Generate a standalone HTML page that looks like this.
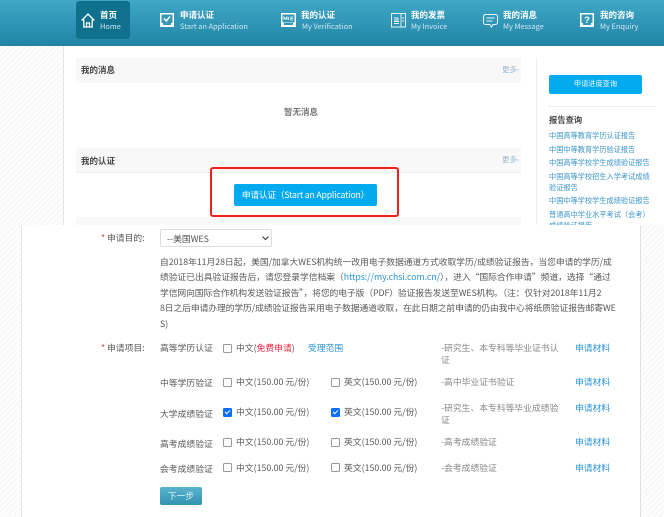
<!DOCTYPE html>
<html lang="zh">
<head>
<meta charset="utf-8">
<style>
html,body{margin:0;padding:0}
body{width:664px;height:517px;position:relative;overflow:hidden;background:#fff;font-family:"Noto Sans CJK SC","Liberation Sans",sans-serif;font-size:10px;color:#555}
.a{position:absolute;white-space:nowrap}
.hatch{background:repeating-linear-gradient(135deg,#fefefe 0 2px,#f8f8f8 2px 4px)}
.nav{position:absolute;left:0;top:0;width:664px;height:46px;background:linear-gradient(#40a7c6,#2184a6)}
.t1{font-size:8.500px;font-weight:bold;color:#fff;line-height:12px}
.t2{font-size:7.400px;color:#cfe8f1;line-height:12px}
.bar{position:absolute;left:76px;width:445px;background:#f8f8f8}
.h{font-size:8.500px;font-weight:bold;color:#444;line-height:12px}
.more{font-size:7.500px;color:#9db4cf;line-height:12px}
.l{font-size:7.200px;color:#3a94c8;line-height:12px}
.f{font-size:8.800px;color:#5a5a5a;line-height:12px}
.cb{position:absolute;width:7px;height:7px;border:1px solid #999;border-radius:1.500px;background:#fff}
.cb.on{background:#0d6efd;border-color:#0d6efd}
.cb.on:after{content:"";position:absolute;left:1px;top:1px;width:4px;height:2px;border-left:1px solid #fff;border-bottom:1px solid #fff;transform:rotate(-45deg)}
.link{color:#2b95d6}
.g{color:#888}
.star{color:#e33}
</style>
</head>
<body>
<div class="a hatch" style="left:0;top:46px;width:63px;height:471px"></div>
<div class="a" style="left:63px;top:46px;width:1px;height:179px;background:#e4e4e4"></div>
<div class="nav"></div>
<div class="a" style="left:76px;top:1px;width:54px;height:38px;background:#10718f;border-radius:3px"></div>

<svg class="a" style="left:81px;top:13px" width="14" height="15" viewBox="0 0 14 15" fill="none" stroke="#fff" stroke-width="1.300"><path d="M.7 7.500 7 1 13.300 7.500M2.800 6.500v7.500h8.400V6.500M5.500 14V10h3v4"/></svg>
<div class="a t1" style="left:100px;top:9px">首页</div><div class="a t2" style="left:100px;top:21px">Home</div>

<svg class="a" style="left:160px;top:13px" width="14" height="15" viewBox="0 0 14 15"><rect x="0" y="0" width="14" height="14" fill="#fff"/><rect x="1.500" y="1.500" width="11" height="8.500" fill="#3497b6"/><path d="M4 5.500 6.300 8 10 3.500" stroke="#fff" stroke-width="1.500" fill="none"/><path d="M3 10h8v2H3z" fill="#3497b6"/></svg>
<div class="a t1" style="left:180px;top:9px">申请认证</div><div class="a t2" style="left:180px;top:21px">Start an Application</div>

<svg class="a" style="left:281px;top:13px" width="15" height="15" viewBox="0 0 15 15"><rect width="15" height="14" fill="#fff"/><rect x="1.500" y="1.500" width="12" height="8" fill="#3497b6"/><path d="M3 7V4l1.500 2L6 4v3M7.500 4v3M9 4h3M9 5.500h3M9 7h3" stroke="#fff" stroke-width=".8" fill="none"/><path d="M3 10h9v2H3z" fill="#3497b6"/></svg>
<div class="a t1" style="left:301px;top:9px">我的认证</div><div class="a t2" style="left:302px;top:21px">My Verification</div>

<svg class="a" style="left:391px;top:13px" width="15" height="15" viewBox="0 0 15 15" fill="none" stroke="#e8f5f9"><rect x=".5" y=".5" width="14" height="13.500"/><path d="M10 1v13M3 5h4v2H3M3 8.500h5M3 10.500h5M11 5h2M11 8h2" stroke-width=".9"/></svg>
<div class="a t1" style="left:411px;top:9px">我的发票</div><div class="a t2" style="left:411px;top:21px">My Invoice</div>

<svg class="a" style="left:483px;top:14px" width="15" height="14" viewBox="0 0 15 14" fill="none" stroke="#e8f5f9"><path d="M2.500 .5h10a2 2 0 0 1 2 2v6a2 2 0 0 1-2 2H10l-1.500 2.500L7 10.500H2.500a2 2 0 0 1-2-2v-6a2 2 0 0 1 2-2z"/><path d="M3.500 4h8M3.500 7h6" stroke-width=".9"/></svg>
<div class="a t1" style="left:503px;top:9px">我的消息</div><div class="a t2" style="left:503px;top:21px">My Message</div>

<svg class="a" style="left:580px;top:13px" width="14" height="15" viewBox="0 0 14 15"><rect width="14" height="14" fill="#fff"/><rect x="1.500" y="1.500" width="11" height="8.500" fill="#3497b6"/><path d="M3 10h8v2H3z" fill="#3497b6"/><text x="7" y="10" font-size="9.500" font-weight="bold" fill="#fff" text-anchor="middle" font-family="Liberation Sans">?</text></svg>
<div class="a t1" style="left:600px;top:9px">我的咨询</div><div class="a t2" style="left:600px;top:21px">My Enquiry</div>

<!-- upper left -->
<div class="bar" style="top:58px;height:25px"></div>
<div class="a h" style="left:81px;top:64px">我的消息</div>
<div class="a more" style="left:502px;top:64px">更多<span style="font-size:6px">›</span></div>
<div class="a" style="left:284px;top:106px;font-size:8.500px;line-height:13px;font-weight:bold;color:#777">暂无消息</div>
<div class="bar" style="top:148px;height:24px;border-bottom:1px solid #eee"></div>
<div class="a h" style="left:81px;top:155px">我的认证</div>
<div class="a more" style="left:502px;top:154px">更多<span style="font-size:6px">›</span></div>
<div class="bar" style="top:217px;height:8px"></div>
<div class="a" style="left:234px;top:184px;width:143px;height:22px;background:#03aaee;border-radius:2px;color:#fff;font-size:8.700px;letter-spacing:-.18px;line-height:22px;text-align:center">申请认证（Start an Application）</div>
<div class="a" style="left:210px;top:167px;width:185px;height:46px;border:2px solid #f3201c;border-radius:3px"></div>

<!-- right column -->
<div class="a" style="left:536px;top:58px;width:1px;height:167px;background:#eee"></div>
<div class="a" style="left:549px;top:75px;width:93px;height:19px;background:#03aaee;border-radius:2px;color:#e8f8ff;font-size:7.200px;line-height:19px;text-align:center">申请进度查询</div>
<div class="a" style="left:549px;top:106px;width:106px;border-top:1px dotted #ddd"></div>
<div class="a" style="left:549px;top:114px;font-size:8.300px;line-height:12px;font-weight:bold;color:#444">报告查询</div>
<div class="a l" style="left:549px;top:130px">中国高等教育学历认证报告</div>
<div class="a l" style="left:549px;top:144px">中国中等教育学历验证报告</div>
<div class="a l" style="left:549px;top:157px">中国高等学校学生成绩验证报告</div>
<div class="a l" style="left:549px;top:171px">中国高等学校招生入学考试成绩</div>
<div class="a l" style="left:549px;top:182px">验证报告</div>
<div class="a l" style="left:549px;top:195px">中国中等学校学生成绩验证报告</div>
<div class="a l" style="left:549px;top:209px">普通高中学业水平考试（会考）</div>
<div class="a l" style="left:549px;top:220px">成绩验证报告</div>

<!-- lower panel -->
<div class="a hatch" style="left:0;top:225px;width:21px;height:292px"></div>
<div class="a" style="left:21px;top:225px;width:620px;height:292px;background:#fff;border-left:1px solid #e4e4e4;border-right:1px solid #e0e0e0;box-sizing:border-box"></div>
<div class="a hatch" style="left:641px;top:225px;width:23px;height:292px"></div>

<div class="a f star" style="left:101px;top:232px">*</div><div class="a f" style="left:107px;top:232px">申请目的:</div>
<div class="a" style="left:160px;top:229px;width:112px;height:18px;box-sizing:border-box;border:1px solid #ddd;border-radius:2px;font-size:8.800px;line-height:17px;padding-left:6px;color:#555;background:#fff">--美国WES</div>
<svg class="a" style="left:262px;top:236px" width="7" height="5" viewBox="0 0 7 5" fill="none" stroke="#444" stroke-width="1.200"><path d="M.5 .5 3.500 3.500 6.500 .5"/></svg>

<div class="a f" style="left:160px;top:256px;letter-spacing:-.05px">自2018年11月28日起，美国/加拿大WES机构统一改用电子数据通道方式收取学历/成绩验证报告，当您申请的学历/成</div>
<div class="a f" style="left:160px;top:271px;letter-spacing:-.05px">绩验证已出具验证报告后，请您登录学信档案（<span class="link">https://my.chsi.com.cn/</span>），进入“国际合作申请”频道，选择“通过</div>
<div class="a f" style="left:160px;top:287px;letter-spacing:-.1px">学信网向国际合作机构发送验证报告”，将您的电子版（PDF）验证报告发送至WES机构。（注：仅针对2018年11月2</div>
<div class="a f" style="left:160px;top:302px;letter-spacing:-.1px">8日之后申请办理的学历/成绩验证报告采用电子数据通道收取，在此日期之前申请的仍由我中心将纸质验证报告邮寄WE</div>
<div class="a f" style="left:160px;top:318px">S)</div>

<div class="a f star" style="left:101px;top:342px">*</div><div class="a f" style="left:107px;top:342px">申请项目:</div>
<div class="a f" style="left:160px;top:342px">高等学历认证</div>
<div class="cb" style="left:223px;top:344px"></div>
<div class="a f" style="left:236px;top:342px">中文(<span style="color:#f0203c">免费申请</span>)</div>
<div class="a f link" style="left:308px;top:342px">受理范围</div>
<div class="a f g" style="left:441px;top:342px">-研究生、本专科等毕业证书认</div>
<div class="a f g" style="left:441px;top:354px">证</div>
<div class="a f link" style="left:575px;top:342px">申请材料</div>

<div class="a f" style="left:160px;top:377px">中等学历验证</div>
<div class="cb" style="left:223px;top:378px"></div>
<div class="a f" style="left:236px;top:376px">中文(150.00 元/份)</div>
<div class="cb" style="left:331px;top:378px"></div>
<div class="a f" style="left:344px;top:376px">英文(150.00 元/份)</div>
<div class="a f g" style="left:441px;top:376px">-高中毕业证书验证</div>
<div class="a f link" style="left:575px;top:376px">申请材料</div>

<div class="a f" style="left:160px;top:408px">大学成绩验证</div>
<div class="cb on" style="left:223px;top:408px"></div>
<div class="a f" style="left:236px;top:406px">中文(150.00 元/份)</div>
<div class="cb on" style="left:331px;top:408px"></div>
<div class="a f" style="left:344px;top:406px">英文(150.00 元/份)</div>
<div class="a f g" style="left:441px;top:402px">-研究生、本专科等毕业成绩验</div>
<div class="a f g" style="left:441px;top:414px">证</div>
<div class="a f link" style="left:575px;top:402px">申请材料</div>

<div class="a f" style="left:160px;top:438px">高考成绩验证</div>
<div class="cb" style="left:223px;top:438px"></div>
<div class="a f" style="left:236px;top:436px">中文(150.00 元/份)</div>
<div class="cb" style="left:331px;top:438px"></div>
<div class="a f" style="left:344px;top:436px">英文(150.00 元/份)</div>
<div class="a f g" style="left:441px;top:436px">-高考成绩验证</div>
<div class="a f link" style="left:575px;top:436px">申请材料</div>

<div class="a f" style="left:160px;top:463px">会考成绩验证</div>
<div class="cb" style="left:223px;top:463px"></div>
<div class="a f" style="left:236px;top:462px">中文(150.00 元/份)</div>
<div class="cb" style="left:331px;top:463px"></div>
<div class="a f" style="left:344px;top:462px">英文(150.00 元/份)</div>
<div class="a f g" style="left:441px;top:462px">-会考成绩验证</div>
<div class="a f link" style="left:575px;top:462px">申请材料</div>

<div class="a" style="left:160px;top:487px;width:42px;height:18px;background:linear-gradient(#59b3cd,#3293b3);border-radius:2px;color:#e3f3f8;font-size:8.800px;line-height:18px;text-align:center">下一步</div>
</body>
</html>
